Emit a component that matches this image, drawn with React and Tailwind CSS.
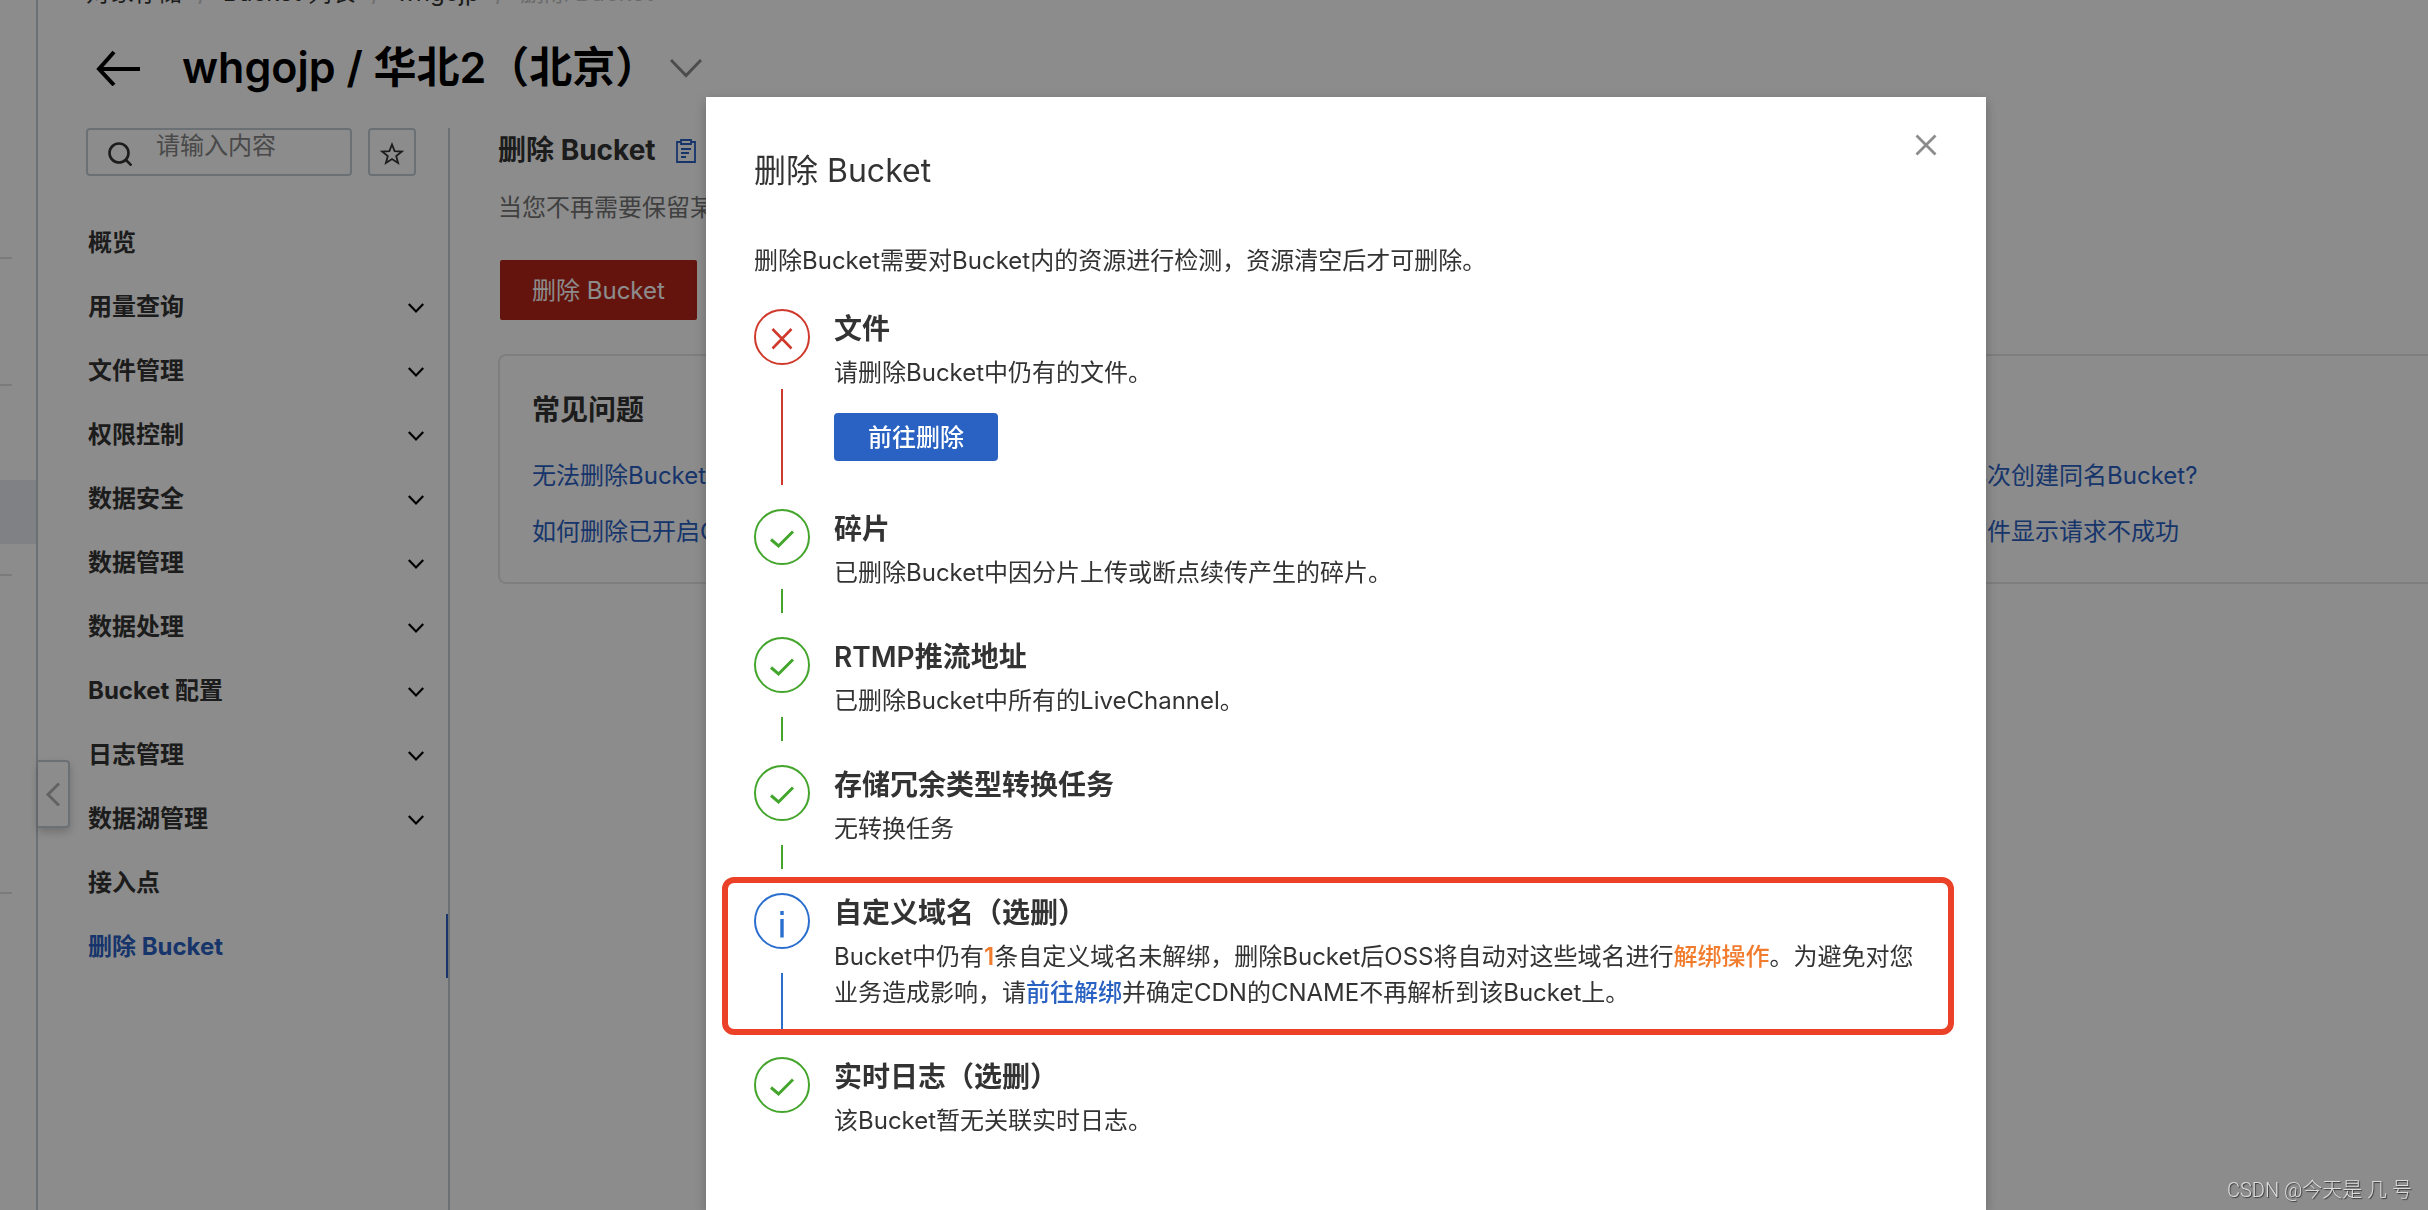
import React, { useState } from "react";

const menuItems = [
  { name: "概览" },
  { name: "用量查询", children: true },
  { name: "文件管理", children: true },
  { name: "权限控制", children: true },
  { name: "数据安全", children: true },
  { name: "数据管理", children: true },
  { name: "数据处理", children: true },
  { name: "Bucket 配置", children: true },
  { name: "日志管理", children: true },
  { name: "数据湖管理", children: true },
  { name: "接入点" },
  { name: "删除 Bucket" },
];

const faqs = [
  "无法删除Bucket怎么办？",
  "删除Bucket后是否可以再次创建同名Bucket?",
  "如何删除已开启OSS-HDFS服务的Bucket？",
  "为什么删除Bucket内的文件显示请求不成功",
];

const StatusIcon = ({ status }) => (
  <svg className="size-14 shrink-0" viewBox="0 0 56 56" fill="none" stroke="currentColor">
    <circle cx="28" cy="28" r="27" strokeWidth="2" />
    {status === "error" && <path d="M18.5 20 37.5 39.5M37.5 20 18.5 39.5" strokeWidth="2.6" />}
    {status === "success" && <path d="M17 30.5 24.5 37 39 22.5" strokeWidth="3" />}
    {status === "info" && <path d="M28 18v4M28 26v18.5" strokeWidth="3.4" />}
  </svg>
);

const statusColors = {
  error: "text-[#cf3a2c]",
  success: "text-[#44a52c]",
  info: "text-[#2a6fce]",
};

const Step = ({ status, title, last, highlight, children }) => (
  <li className="relative flex gap-6">
    <div className={`flex flex-col items-center ${statusColors[status]}`}>
      <StatusIcon status={status} />
      {!last && <div className="my-6 w-0.5 grow bg-current" />}
    </div>
    <div className="min-w-0 grow pr-4 pb-[46px]">
      <h3 className="text-[28px] leading-10 font-semibold">{title}</h3>
      <div className="mt-1.5 leading-9">{children}</div>
    </div>
    {highlight && (
      <div className="pointer-events-none absolute -top-4 -right-4 bottom-[22px] -left-8 rounded-xl border-[6px] border-[#eb4128]" />
    )}
  </li>
);

const DeleteModal = ({ onClose }) => (
  <div className="fixed inset-0 flex justify-center overflow-hidden bg-black/45 pt-[97px] pl-66">
    <div
      role="dialog"
      aria-labelledby="modal-title"
      className="w-full max-w-[1280px] bg-white px-12 shadow-[0_4px_12px_rgba(0,0,0,0.25)]"
    >
      <div className="flex items-start justify-between">
        <h2 id="modal-title" className="pt-[50px] text-[32px] leading-[48px]">
          删除 Bucket
        </h2>
        <button type="button" aria-label="关闭" onClick={onClose} className="pt-9 text-[#8c8c8c]">
          <svg className="size-6" viewBox="0 0 24 24" fill="none" stroke="currentColor" strokeWidth="2.8">
            <path d="M2.5 2.5 21.5 21.5M21.5 2.5 2.5 21.5" />
          </svg>
        </button>
      </div>
      <p className="mt-12 leading-9">
        删除Bucket需要对Bucket内的资源进行检测，资源清空后才可删除。
      </p>

      <ol className="mt-[30px]">
        <Step status="error" title="文件">
          <p>请删除Bucket中仍有的文件。</p>
          <button
            type="button"
            className="mt-[22px] block h-12 rounded bg-[#2962c2] px-[34px] pt-0.5 font-medium text-white"
          >
            前往删除
          </button>
          <div className="h-0.5" />
        </Step>
        <Step status="success" title="碎片">
          <p>已删除Bucket中因分片上传或断点续传产生的碎片。</p>
        </Step>
        <Step status="success" title="RTMP推流地址">
          <p>已删除Bucket中所有的LiveChannel。</p>
        </Step>
        <Step status="success" title="存储冗余类型转换任务">
          <p>无转换任务</p>
        </Step>
        <Step status="info" title="自定义域名（选删）" highlight>
          <p>
            Bucket中仍有<span className="font-semibold text-[#f27c2e]">1</span>
            条自定义域名未解绑，删除Bucket后OSS将自动对这些域名进行
            <span className="font-medium text-[#f27c2e]">解绑操作</span>。为避免对您业务造成影响，请
            <a href="#unbind" className="font-medium text-[#2962c2]">前往解绑</a>
            并确定CDN的CNAME不再解析到该Bucket上。
          </p>
        </Step>
        <Step status="success" title="实时日志（选删）" last>
          <p>该Bucket暂无关联实时日志。</p>
        </Step>
      </ol>
    </div>
  </div>
);

const App = () => {
  const [open, setOpen] = useState(true);
  const [active, setActive] = useState("删除 Bucket");

  return (
    <div className="flex h-screen overflow-hidden bg-white font-[Inter,'Noto_Sans_CJK_SC',sans-serif] text-2xl text-[#333]">
      {/* Product nav */}
      <aside className="w-[38px] shrink-0 border-r-2 border-[#c3ccd5]">
        <div className="h-[259px] w-3 border-b-2 border-[#e0e0e0]" />
        <div className="h-[127px] w-3 border-b-2 border-[#e0e0e0]" />
        <div className="mt-[94px] h-16 bg-[#e7ebf2]" />
        <div className="h-8 w-3 border-b-2 border-[#e0e0e0]" />
        <div className="h-[318px] w-3 border-b-2 border-[#e0e0e0]" />
      </aside>

      <main className="relative flex min-w-0 grow flex-col">
        <button
          type="button"
          aria-label="收起"
          className="absolute top-[760px] left-0 flex h-[68px] w-8 items-center justify-center rounded-r border-2 border-l-0 border-[#c3ccd5] bg-white text-[#b5b5b5] shadow-[0_4px_8px_rgba(0,0,0,0.2)]"
        >
          <svg className="h-6 w-4" viewBox="0 0 16 24" fill="none" stroke="currentColor" strokeWidth="3">
            <path d="M14 1.5 3 12.5 14 23.5" />
          </svg>
        </button>

        {/* Header */}
        <header className="pl-12">
          <nav className="flex h-[11px] items-end gap-4 overflow-hidden leading-9">
            <a href="#oss">对象存储</a>
            <span className="text-[#ccc]">/</span>
            <a href="#buckets">Bucket 列表</a>
            <span className="text-[#ccc]">/</span>
            <a href="#bucket">whgojp</a>
            <span className="text-[#ccc]">/</span>
            <span className="text-[#c4c4c4]">删除 Bucket</span>
          </nav>
          <div className="flex h-[117px] items-center pb-1 text-black">
            <button type="button" aria-label="返回" className="ml-2">
              <svg className="h-9 w-12" viewBox="0 0 48 36" fill="none" stroke="currentColor" strokeWidth="4">
                <path d="M46 19H5M20 2 5 19 20 35" />
              </svg>
            </button>
            <h1 className="ml-10 text-[43px] font-semibold">whgojp / 华北2（北京）</h1>
            <button type="button" aria-label="切换 Bucket" className="ml-3 text-[#8c8c8c]">
              <svg className="h-5 w-8" viewBox="0 0 32 20" fill="none" stroke="currentColor" strokeWidth="3">
                <path d="M1 2 16 17.5 31 2" />
              </svg>
            </button>
          </div>
        </header>

        <div className="flex grow">
          {/* Bucket menu */}
          <div className="w-[412px] shrink-0 border-r-2 border-[#c3ccd5] pl-12">
            <div className="flex gap-4 pr-8">
              <label className="flex h-12 min-w-0 grow items-start rounded border-2 border-[#c3ccd5] pl-5">
                <svg className="mt-3 size-6 shrink-0" viewBox="0 0 24 24" fill="none" stroke="currentColor" strokeWidth="2.6">
                  <circle cx="11" cy="11" r="9.5" />
                  <path d="m17.5 17.5 6 6" />
                </svg>
                <input
                  type="text"
                  aria-label="搜索"
                  placeholder="请输入内容"
                  className="ml-6 h-8 w-full min-w-0 outline-none placeholder:text-[#858585]"
                />
              </label>
              <button
                type="button"
                aria-label="收藏"
                className="flex size-12 shrink-0 items-center justify-center rounded border-2 border-[#c3ccd5]"
              >
                <svg className="mt-1 size-6" viewBox="0 0 24 24" fill="none" stroke="currentColor" strokeWidth="1.8">
                  <path d="m12 2.5 2.6 6.6 7.2.4-5.6 4.5 1.9 7-6.1-3.9L5.9 21l1.9-7L2.2 9.5l7.2-.4z" />
                </svg>
              </button>
            </div>
            <ul className="mt-[34px]">
              {menuItems.map((item) => (
                <li key={item.name}>
                  <button
                    type="button"
                    onClick={() => setActive(item.name)}
                    className={
                      "flex h-16 w-full items-center justify-between border-r-2 pt-0.5 pr-[22px] pl-0.5 font-bold " +
                      (active === item.name
                        ? "border-[#2a62c4] text-[#2a62c4]"
                        : "border-transparent")
                    }
                  >
                    {item.name}
                    {item.children && (
                      <svg className="mt-0.5 h-3 w-4" viewBox="0 0 16 12" fill="none" stroke="black" strokeWidth="2.2">
                        <path d="M.8 2 8 9.5 15.2 2" />
                      </svg>
                    )}
                  </button>
                </li>
              ))}
            </ul>
          </div>

          {/* Content */}
          <section className="min-w-0 grow pl-12">
            <div className="flex h-[46px] items-center gap-5">
              <h2 className="text-[28px] font-bold">删除 Bucket</h2>
              <svg className="h-6 w-5 text-[#2a62c4]" viewBox="0 0 20 24" fill="none" stroke="currentColor" strokeWidth="1.8">
                <path d="M5 3H1v20h18V3h-4M5 1h10v4H5zM5 10h10M5 14h8M5 18h5" />
              </svg>
            </div>
            <p className="mt-4 leading-9 text-[#757575]">
              当您不再需要保留某个Bucket时，您可以将其删除。
            </p>
            <button
              type="button"
              onClick={() => setOpen(true)}
              className="mt-[34px] ml-0.5 h-15 rounded-xs bg-[#b62418] px-8 pt-0.5 text-white"
            >
              删除 Bucket
            </button>

            <div className="mt-[34px] rounded-l-lg border-2 border-r-0 border-[#e6e6e6] pt-[34px] pb-8 pl-8">
              <h3 className="text-[28px] leading-10 font-semibold">常见问题</h3>
              <ul className="mt-7 grid grid-cols-[1185px_1fr] gap-y-5 leading-9 text-[#2a62c4]">
                {faqs.map((faq) => (
                  <li key={faq}>
                    <a href="#faq">{faq}</a>
                  </li>
                ))}
              </ul>
            </div>
          </section>
        </div>
      </main>

      {open && <DeleteModal onClose={() => setOpen(false)} />}

      <div className="fixed right-4 bottom-1.5 font-[Roboto,'Noto_Sans_CJK_SC',sans-serif] text-xl leading-7 font-light text-[#dcdcdc] [text-shadow:1px_1px_1px_rgba(0,0,0,0.6)]">
        CSDN @今天是 几 号
      </div>
    </div>
  );
};

export default App;
